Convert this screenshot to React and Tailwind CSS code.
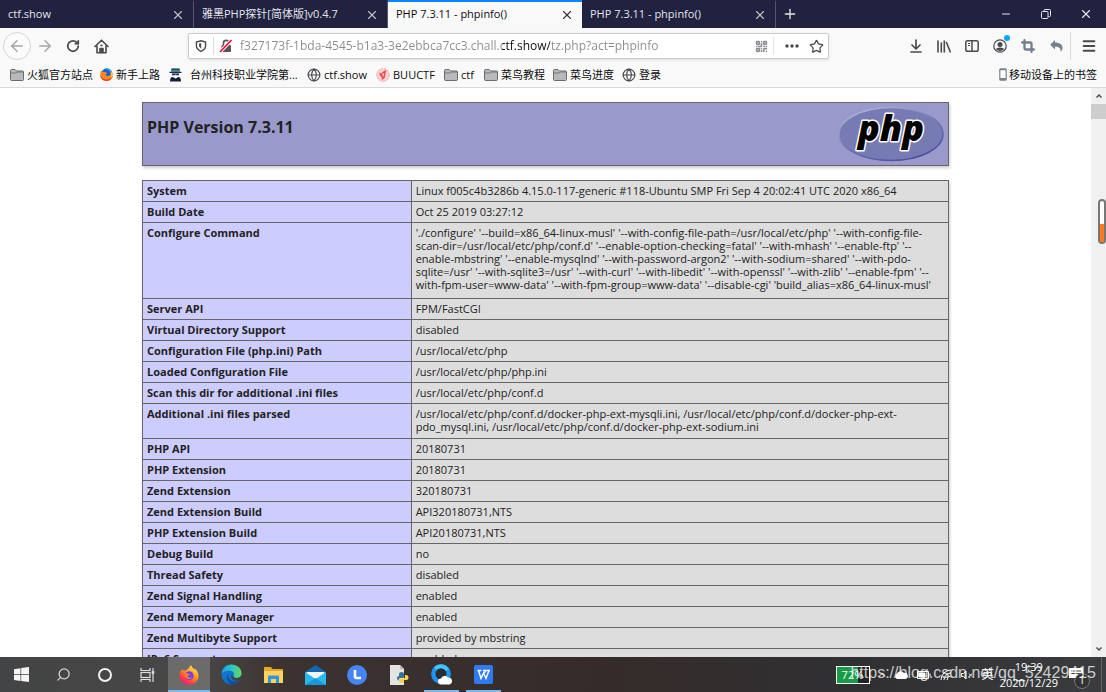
import React, { useState } from 'react';
import { ArrowLeft, ArrowRight, RotateCw, Search, Crop, X, Plus, Minus, Menu, Star, QrCode, Globe } from 'lucide-react';

const TABS = [
  { id: 1, title: 'ctf.show' },
  { id: 2, title: '雅黑PHP探针[简体版]v0.4.7' },
  { id: 3, title: 'PHP 7.3.11 - phpinfo()' },
  { id: 4, title: 'PHP 7.3.11 - phpinfo()' },
];

const INFO_ROWS = [
  ['System', 'Linux f005c4b3286b 4.15.0-117-generic #118-Ubuntu SMP Fri Sep 4 20:02:41 UTC 2020 x86_64'],
  ['Build Date', 'Oct 25 2019 03:27:12'],
  [
    'Configure Command',
    "'./configure' '--build=x86_64-linux-musl' '--with-config-file-path=/usr/local/etc/php' '--with-config-file-\nscan-dir=/usr/local/etc/php/conf.d' '--enable-option-checking=fatal' '--with-mhash' '--enable-ftp' '--\nenable-mbstring' '--enable-mysqlnd' '--with-password-argon2' '--with-sodium=shared' '--with-pdo-\nsqlite=/usr' '--with-sqlite3=/usr' '--with-curl' '--with-libedit' '--with-openssl' '--with-zlib' '--enable-fpm' '--\nwith-fpm-user=www-data' '--with-fpm-group=www-data' '--disable-cgi' 'build_alias=x86_64-linux-musl'",
  ],
  ['Server API', 'FPM/FastCGI'],
  ['Virtual Directory Support', 'disabled'],
  ['Configuration File (php.ini) Path', '/usr/local/etc/php'],
  ['Loaded Configuration File', '/usr/local/etc/php/php.ini'],
  ['Scan this dir for additional .ini files', '/usr/local/etc/php/conf.d'],
  [
    'Additional .ini files parsed',
    '/usr/local/etc/php/conf.d/docker-php-ext-mysqli.ini, /usr/local/etc/php/conf.d/docker-php-ext-\npdo_mysql.ini, /usr/local/etc/php/conf.d/docker-php-ext-sodium.ini',
  ],
  ['PHP API', '20180731'],
  ['PHP Extension', '20180731'],
  ['Zend Extension', '320180731'],
  ['Zend Extension Build', 'API320180731,NTS'],
  ['PHP Extension Build', 'API20180731,NTS'],
  ['Debug Build', 'no'],
  ['Thread Safety', 'disabled'],
  ['Zend Signal Handling', 'enabled'],
  ['Zend Memory Manager', 'enabled'],
  ['Zend Multibyte Support', 'provided by mbstring'],
  ['IPv6 Support', 'enabled'],
];

const FolderIcon = () => (
  <svg className="w-[14px] h-[12px] shrink-0" viewBox="0 0 14 12">
    <path d="M0.5 10.5v-9q0-1 1-1h3.5l1.5 1.5h6q1 0 1 1v7.500q0 1-1 1h-11q-1 0-1-1z" fill="#b9b9bb" stroke="#6b6b6f" />
    <path d="M1 4h5l1-1h6" stroke="#77777b" fill="none" />
  </svg>
);

const FirefoxIcon = ({ className }) => (
  <svg className={className} viewBox="0 0 20 20">
    <defs>
      <linearGradient id="ffBody" x1="0.8" y1="0" x2="0.2" y2="1">
        <stop offset="0" stopColor="#fff04a" />
        <stop offset="0.4" stopColor="#ff9a1f" />
        <stop offset="0.75" stopColor="#ff3b47" />
        <stop offset="1" stopColor="#e3158d" />
      </linearGradient>
    </defs>
    <path d="M3.200 4.200l1.300 1.400c.7-.2 1.700-.2 2.500.1C7.800 4.500 9 3.500 10 3.300 10.200 2 11 .9 12.200.2c.2 1.800 2 2.800 3.200 4.200.2-.3.200-.8.100-1.200 2.600 2 4 5 4 7.800 0 5-4.200 8.800-9.500 8.800S.6 15.900.6 10.900c0-2.600 1-5 2.600-6.700z" fill="url(#ffBody)" />
    <circle cx="10.400" cy="10.600" r="4.300" fill="#7540e8" />
    <path d="M4.800 8.500c1.700-1 3-.5 4.300.4l2.300.1c0 1-2.400 1.200-2.600 2.200-.1 1.500 2.500 2.200 4.400 1-1 2.600-6.800 3.500-8.400-3.700z" fill="#ff7a2a" />
    <path d="M9 5.500c3 0 5.600 1.500 5.800 4.700.4-.4.500-1.200.4-1.900C14.300 5.800 11.500 4.500 9 5.500z" fill="#ffb52b" />
  </svg>
);

const FirefoxClassicIcon = () => (
  <svg className="w-[13px] h-[13px] shrink-0" viewBox="0 0 20 20">
    <circle cx="10.500" cy="9" r="8.500" fill="#1f5fd0" />
    <path d="M9 1a9 9 0 018 5" fill="none" stroke="#2cb5e8" strokeWidth="2" />
    <path d="M1.500 4l2.500 2c1.500-.7 3-.5 4 .5L11 7.500 8.500 10c.3 2 3 3 5.500 2 2.500-1.200 3-4 2.300-6.500C18.500 6.500 20 9 19.700 11.500 19 16.500 15 20 10 20 4.500 20 .3 16 .3 10.500.3 8 .6 6 1.500 4z" fill="#ff8a1e" />
    <path d="M.3 10.500C1.500 15 5 17.500 9.500 17.500c4 0 7.500-2 10-6C19 16.500 15 20 10 20 4.500 20 .3 16 .3 10.500z" fill="#f0402c" />
    <path d="M16 5.500c2.500 1.500 3.700 3.500 3.700 6-1 2-2 3-3.200 3.500C18 12 17.500 9 16 5.500z" fill="#ffd83a" />
  </svg>
);

const SchoolIcon = () => (
  <svg className="w-[13px] h-[14px] shrink-0" viewBox="0 0 13 14">
    <path d="M2.500 0.500h8l.5 3h-9z" fill="#1d2940" />
    <path d="M2.300 1.800h8.400v1.700H2.300z" fill="#2b9c93" />
    <path d="M0.500 3.800h12v1.200h-12z" fill="#1d2940" />
    <path d="M3 5h7v3.500q-3.500 2.500-7 0z" fill="#f3f3f6" />
    <path d="M3 5.600h7v1.700H7.500l-1-.7-1 .7H3z" fill="#222a40" />
    <path d="M1 13.500q0-4.500 2.500-4.500l3 1.500 3-1.500q2.500 0 2.500 4.500z" fill="#191d38" />
  </svg>
);

const BuuIcon = () => (
  <svg className="w-[14px] h-[14px] shrink-0" viewBox="0 0 14 14">
    <circle cx="7" cy="7" r="6.300" fill="#fbd3d3" stroke="#f3a0a0" strokeDasharray="2 1" />
    <path d="M3.500 4.500l2 .8L7 3.500l3.500-1.500-1 3.500L9 9.500 6 12l-.5-3-2-2z" fill="#ea5050" />
    <path d="M6 6l2-1-.5 4z" fill="#fbd3d3" />
  </svg>
);

const PhoneIcon = () => (
  <svg className="w-[8px] h-[13px] shrink-0" viewBox="0 0 8 13">
    <rect x="0.800" y="0.800" width="6.400" height="11.400" rx="1" fill="#fff" stroke="#7d8288" strokeWidth="1.200" />
    <path d="M1 10h6v2H1zM1 1h6v1.200H1z" fill="#7d8288" />
  </svg>
);

const GlobeIcon = () => <Globe className="w-[14px] h-[14px] shrink-0 text-[#4a4a4f]" strokeWidth={2} />;

const BOOKMARKS = [
  { label: '火狐官方站点', icon: <FolderIcon />, width: 'w-[90px]' },
  { label: '新手上路', icon: <FirefoxClassicIcon />, width: 'w-[69px]' },
  { label: '台州科技职业学院第...', icon: <SchoolIcon />, width: 'w-[138px]', wide: true },
  { label: 'ctf.show', icon: <GlobeIcon />, width: 'w-[69px]' },
  { label: 'BUUCTF', icon: <BuuIcon />, width: 'w-[68px]' },
  { label: 'ctf', icon: <FolderIcon />, width: 'w-[40px]' },
  { label: '菜鸟教程', icon: <FolderIcon />, width: 'w-[69px]' },
  { label: '菜鸟进度', icon: <FolderIcon />, width: 'w-[69px]' },
  { label: '登录', icon: <GlobeIcon />, width: 'w-[60px]' },
];

const TabBar = ({ active, onSelect }) => (
  <div className="flex h-7 shrink-0 bg-[#20223f] text-[#e4e4ea]">
    {TABS.map((tab) => (
      <div
        key={tab.id}
        className={`flex w-[194px] shrink-0 items-center justify-between pl-2 pr-2 border-t-2 ${
          tab.id === active ? 'bg-[#f9f9fa] border-[#0a84ff] text-[#0c0c0d]' : 'border-[#20223f] border-r border-r-[#55566d]'
        }`}
      >
        <button onClick={() => onSelect(tab.id)} className="truncate pb-0.5 text-[11px] leading-4">{tab.title}</button>
        <button aria-label="关闭标签页" className="shrink-0 opacity-80">
          <X className="w-[14px] h-[14px]" strokeWidth={2} />
        </button>
      </div>
    ))}
    <button aria-label="新建标签页" className="flex w-7 items-center justify-center">
      <Plus className="w-4 h-4" strokeWidth={2} />
    </button>
    <div className="ml-auto flex">
      <button aria-label="最小化" className="flex w-10 items-center justify-center">
        <Minus className="w-3 h-3" />
      </button>
      <button aria-label="还原" className="flex w-10 items-center justify-center">
        <svg className="w-[10px] h-[10px]" viewBox="0 0 10 10" fill="none" stroke="currentColor">
          <rect x="0.500" y="2.500" width="6.500" height="7" rx="1" />
          <path d="M3 2.500v-1q0-1 1-1h4.500q1 0 1 1v5q0 1-1 1H7.500" />
        </svg>
      </button>
      <button aria-label="关闭" className="flex w-10 items-center justify-center">
        <X className="w-[14px] h-[14px]" strokeWidth={2} />
      </button>
    </div>
  </div>
);

const NavBar = () => {
  const [url, setUrl] = useState('f327173f-1bda-4545-b1a3-3e2ebbca7cc3.chall.ctf.show/tz.php?act=phpinfo');

  return (
    <div className="flex h-9 shrink-0 items-center pl-[3px] text-[#4a4a4f]">
      <button aria-label="后退" className="flex w-7 h-7 items-center justify-center rounded-full border border-[#d5d5d8] bg-[#fbfbfb] text-[#a5a5a8]">
        <ArrowLeft className="w-[18px] h-[18px]" />
      </button>
      <button aria-label="前进" className="flex w-7 h-7 items-center justify-center text-[#a5a5a8]">
        <ArrowRight className="w-[18px] h-[18px]" />
      </button>
      <button aria-label="刷新" className="flex w-7 h-7 items-center justify-center">
        <RotateCw className="w-[14px] h-[14px]" strokeWidth={3} />
      </button>
      <button aria-label="主页" className="flex w-7 h-7 items-center justify-center">
        <svg className="w-[15px] h-[15px]" viewBox="0 0 15 15" fill="none" stroke="currentColor" strokeWidth="1.600" strokeLinejoin="round" strokeLinecap="round">
          <path d="M1 7.500L7.500 1.200 14 7.500M3 7v6.800h9V7" />
          <path d="M6 13.500V9.500h3v4M7.500 9.500v4M7 6.500h1" />
        </svg>
      </button>
      <div className="mx-[73px] flex h-[26px] min-w-0 flex-1 items-center rounded-[2px] border border-[#cccccf] bg-white shadow-sm">
        <button aria-label="跟踪保护" className="flex w-6 shrink-0 justify-center">
          <svg className="w-3 h-3" viewBox="0 0 12 12" fill="none" stroke="#4a4a4f" strokeWidth="1.400">
            <path d="M6 .8l4.600 1.200v3.500Q10.600 9.500 6 11.300 1.400 9.500 1.400 5.500V2z" />
            <path d="M6.200 3.200v5.500Q4 7.500 4 5.200V3.600z" fill="#4a4a4f" stroke="none" />
          </svg>
        </button>
        <span className="h-[18px] w-px shrink-0 bg-[#dcdcde]" />
        <button aria-label="连接不安全" className="flex w-6 shrink-0 justify-center">
          <svg className="w-[14px] h-[14px]" viewBox="0 0 14 14">
            <path d="M4.500 6V4a2.600 2.600 0 015.200 0v2" fill="none" stroke="#55555a" strokeWidth="1.700" />
            <rect x="2.500" y="6" width="9.500" height="7" rx="1" fill="#55555a" />
            <path d="M1 13L12.500 1" stroke="#fff" strokeWidth="3.400" />
            <path d="M1 13L12.500 1" stroke="#ff0039" strokeWidth="1.700" />
          </svg>
        </button>
        {/* the gradient darkens only the host part of the address */}
        <input
          aria-label="地址"
          value={url}
          onChange={(e) => setUrl(e.target.value)}
          className="ml-0.5 min-w-0 flex-1 bg-clip-text bg-[linear-gradient(90deg,#8a8a8d_262px,#0c0c0d_262px,#0c0c0d_310px,#8a8a8d_310px)] text-transparent text-[12px] leading-5 outline-none"
        />
        <button aria-label="二维码" className="flex w-6 shrink-0 justify-center text-[#8d8d92]">
          <QrCode className="w-[13px] h-[13px]" strokeWidth={3} />
        </button>
        <span className="h-[18px] w-px shrink-0 bg-[#e4e4e6]" />
        <button aria-label="页面操作" className="ml-1.5 flex w-6 shrink-0 justify-center">
          <svg className="w-[14px] h-1" viewBox="0 0 14 4" fill="#4a4a4f">
            <circle cx="2" cy="2" r="1.700" />
            <circle cx="7" cy="2" r="1.700" />
            <circle cx="12" cy="2" r="1.700" />
          </svg>
        </button>
        <button aria-label="收藏" className="flex w-6 shrink-0 justify-center">
          <Star className="w-[15px] h-[15px]" strokeWidth={2} />
        </button>
      </div>
      <button aria-label="下载" className="flex w-7 justify-center">
        <svg className="w-3 h-[14px]" viewBox="0 0 12 14" fill="none" stroke="currentColor" strokeWidth="1.700" strokeLinecap="round" strokeLinejoin="round">
          <path d="M6 1v8.500M2 6l4 4 4-4M1 13h10" />
        </svg>
      </button>
      <button aria-label="我的足迹" className="flex w-7 justify-center">
        <svg className="w-[14px] h-[13px]" viewBox="0 0 14 13" fill="none" stroke="currentColor" strokeWidth="1.600" strokeLinecap="round">
          <path d="M1 1v11M4.300 3v9M7.300 1v11M9.500 2.500l3.700 9.300" />
        </svg>
      </button>
      <button aria-label="侧栏" className="flex w-7 justify-center">
        <svg className="w-[14px] h-3" viewBox="0 0 14 12" fill="none" stroke="currentColor" strokeWidth="1.500">
          <rect x="0.800" y="0.800" width="12.400" height="10.400" rx="1.800" />
          <path d="M7 1v10" />
          <path d="M3 3.500h2M3 5.500h2" strokeWidth="1" />
        </svg>
      </button>
      <button aria-label="账户" className="relative flex w-7 justify-center">
        <svg className="w-[14px] h-[14px]" viewBox="0 0 14 14">
          <circle cx="7" cy="7" r="6.200" fill="none" stroke="#4a4a4f" strokeWidth="1.200" />
          <circle cx="7" cy="5.500" r="2.500" fill="#4a4a4f" />
          <path d="M2.800 10q1-1.500 4.200-1.500T11.200 10Q9.500 12 7 12t-4.200-2z" fill="#4a4a4f" />
        </svg>
        <span className="absolute -top-1 right-1 w-[6px] h-[6px] rounded-full bg-[#00a8ff]" />
      </button>
      <button aria-label="截图" className="flex w-7 justify-center text-[#74808d]">
        <Crop className="w-[14px] h-[14px]" strokeWidth={4} />
      </button>
      <button aria-label="撤销" className="flex w-7 justify-center text-[#74808d]">
        <svg className="w-[13px] h-3" viewBox="0 0 13 12" fill="currentColor">
          <path d="M5 0v2.500c5 0 7.500 2.300 7.500 5.500 0 1.500-.8 3-2 3.800.8-3-1-5-5.500-5V9.500L0.200 4.700z" />
        </svg>
      </button>
      <span className="h-7 w-px shrink-0 bg-[#dcdcde]" />
      <button aria-label="菜单" className="flex w-[35px] justify-center">
        <Menu className="w-4 h-4" strokeWidth={3} />
      </button>
    </div>
  );
};

const BookmarksBar = () => (
  <nav className="flex h-6 shrink-0 items-center pb-0.5 pl-[10px] pr-[9px] border-b border-[#d9d9dc] text-[11px] leading-4 text-[#0c0c0d]">
    {BOOKMARKS.map((item) => (
      <a key={item.label} href="#" className={`flex shrink-0 items-center whitespace-nowrap ${item.wide ? 'gap-2' : 'gap-[3px]'} ${item.width}`}>
        {item.icon}
        {item.label}
      </a>
    ))}
    <a href="#" className="ml-auto flex shrink-0 items-center gap-0.5">
      <PhoneIcon />
      移动设备上的书签
    </a>
  </nav>
);

const PhpLogo = () => (
  <svg className="w-[108px] h-[58px] shrink-0" viewBox="0 0 108 58" role="img" aria-label="PHP logo">
    <defs>
      <linearGradient id="phpEdge" x1="0.2" y1="0" x2="0.8" y2="1">
        <stop offset="0" stopColor="#b4b6dc" />
        <stop offset="0.5" stopColor="#7478b4" />
        <stop offset="1" stopColor="#45479a" />
      </linearGradient>
    </defs>
    <ellipse cx="54" cy="29" rx="52" ry="26.500" fill="#777bb3" stroke="url(#phpEdge)" strokeWidth="1.500" />
    <text
      x="54"
      y="36"
      textAnchor="middle"
      className="font-['Open_Sans'] font-extrabold italic text-[36px]"
      fill="#000"
      stroke="#fff"
      strokeWidth="3"
      strokeLinejoin="round"
      paintOrder="stroke"
    >
      php
    </text>
  </svg>
);

const PhpInfo = () => (
  <main className="min-w-0 flex-1 overflow-hidden bg-white px-4 pt-[14px] text-[#222222]">
    <div className="mx-auto w-full max-w-[807px]">
      <header className="flex h-16 items-start justify-between border border-[#666666] bg-[#9999cc] pl-1 pr-[3px] pt-[2px] shadow-[1px_2px_3px_#cccccc]">
        <h1 className="pt-2.5 text-[16px] leading-6 font-bold">PHP Version 7.3.11</h1>
        <PhpLogo />
      </header>
      <table className="mt-[14px] h-[490px] w-full table-fixed border-collapse text-[11px] leading-[13px] shadow-[1px_2px_3px_#cccccc]">
        <tbody>
          {INFO_ROWS.map(([name, value]) => (
            <tr key={name}>
              <th scope="row" className="w-1/3 border border-[#666666] bg-[#ccccff] px-1 py-[3px] text-left align-top font-bold">
                {name}
              </th>
              <td className="whitespace-pre-line border border-[#666666] bg-[#dddddd] px-1 py-[3px] align-top">{value}</td>
            </tr>
          ))}
        </tbody>
      </table>
    </div>
  </main>
);

const ScrollBar = () => (
  <div className="flex w-[15px] shrink-0 flex-col items-center bg-[#f0f0f0] text-[#505050]">
    <svg className="my-1 w-2 h-2" viewBox="0 0 8 8" fill="none" stroke="currentColor" strokeWidth="1.500">
      <path d="M1.500 5.500L4 3l2.500 2.500" />
    </svg>
    <span className="h-[15px] w-full bg-[#cdcdcd]" />
    <svg className="mt-auto mb-1 w-2 h-2" viewBox="0 0 8 8" fill="none" stroke="currentColor" strokeWidth="1.500">
      <path d="M1.500 2.500L4 5l2.500-2.500" />
    </svg>
  </div>
);

const TASKS = [
  {
    name: '开始',
    icon: (
      <svg className="w-[15px] h-[15px]" viewBox="0 0 15 15" fill="#f5f5f5">
        <path d="M0 2.200L6.500 1.200v6H0zM7.200 1.100L15 0v7.200H7.200zM0 7.900h6.500v6L0 13zM7.200 7.900H15V15l-7.800-1z" />
      </svg>
    ),
  },
  { name: '搜索', icon: <Search className="w-[15px] h-[15px] -scale-x-100 text-[#d8d8d8]" strokeWidth={2} /> },
  { name: 'Cortana', icon: <span className="w-[14px] h-[14px] rounded-full border-2 border-[#f0f0f0]" /> },
  {
    name: '任务视图',
    icon: (
      <svg className="w-[15px] h-[14px]" viewBox="0 0 15 14" fill="none" stroke="#dddddd" strokeWidth="1.200">
        <path d="M1 0v2.500h9V0M1 14v-2.500h9V14M13 0v14" />
        <rect x="1" y="4.500" width="9" height="5" />
        <path d="M11.700 4.500h2.600" strokeWidth="2.600" />
      </svg>
    ),
  },
  { name: 'Firefox', tile: 'bg-[#6b6b6b]', line: 'w-full', icon: <FirefoxIcon className="w-5 h-5" /> },
  {
    name: 'Edge',
    icon: (
      <svg className="w-[21px] h-[21px]" viewBox="0 0 21 21">
        <defs>
          <linearGradient id="edgeTop" x1="0" y1="0.500" x2="1" y2="0.500">
            <stop offset="0" stopColor="#1b9de2" />
            <stop offset="0.500" stopColor="#2cc3c9" />
            <stop offset="1" stopColor="#62dd58" />
          </linearGradient>
        </defs>
        <circle cx="10.500" cy="10.500" r="10" fill="#1173cc" />
        <path d="M.5 10.500C.5 4.500 5 .5 10.500.5S20.500 4.500 20.500 9c0 3.200-2.500 5-5 5s-3.700-1-3-2.200c1.500-2.500-.5-5-4-5-4 0-7.500 1.500-8 3.700z" fill="url(#edgeTop)" />
        <path d="M7.500 9.500C6 13 8.500 17 13 17.300c2.400.1 4.300-.6 5.800-1.600-2 3-5 4.800-8.300 4.800C6.500 19 4.500 13 7.500 9.500z" fill="#0c4f9e" />
        <path d="M12.500 11.800c-.7 1.200.5 2.200 3 2.200 2 0 4-1 4.700-2.700l.8 4-2 1c-5 2-9.500-1-9-4.500z" fill="#464442" />
      </svg>
    ),
  },
  {
    name: '文件资源管理器',
    icon: (
      <svg className="w-[19px] h-4" viewBox="0 0 19 16">
        <path d="M0 0h7l1.500 2H18q1 0 1 1v4H0z" fill="#e5a824" />
        <path d="M0 4h19v12H0z" fill="#ffd35c" />
        <path d="M4 16V9.500q0-1 1-1h9q1 0 1 1V16h-3v-4H7v4z" fill="#3595dc" />
      </svg>
    ),
  },
  {
    name: '邮件',
    icon: (
      <svg className="w-[21px] h-5" viewBox="0 0 21 20">
        <path d="M0 7L10.500 0 21 7v2H0z" fill="#1166ae" />
        <path d="M1.500 7h18v7h-18z" fill="#f2f6fa" />
        <path d="M0 7l10.500 7L21 7v13H0z" fill="#2cb8ec" />
        <path d="M0 20l10.500-7L21 20z" fill="#1796db" />
      </svg>
    ),
  },
  {
    name: 'L',
    icon: (
      <svg className="w-5 h-5" viewBox="0 0 20 20">
        <circle cx="10" cy="10" r="10" fill="#4585f5" />
        <path d="M8 5v6.500q0 1.500 1.500 1.500H14" fill="none" stroke="#fff" strokeWidth="2.600" />
      </svg>
    ),
  },
  {
    name: 'Python',
    icon: (
      <svg className="w-5 h-5" viewBox="0 0 20 20">
        <path d="M1 0h10l4 4v16H1z" fill="#e4e4e2" />
        <path d="M11 0v4h4z" fill="#b9b9b7" />
        <path d="M10 12V9q0-2 2.500-2T15 9v3q0 1-1 1h-3q-1.500 0-1.500 2.500Q8 15 8 13t2-2z" fill="#35719f" />
        <path d="M16 10h1.500q2 0 2 2.500t-2 2.500H15v1q0 2-2.500 2T10 16v-1q0-1.500 1.500-1.500h3q1.500 0 1.500-1.500z" fill="#fdd13f" />
      </svg>
    ),
  },
  {
    name: 'QQ浏览器',
    line: 'w-[35px]',
    icon: (
      <svg className="w-[21px] h-[21px]" viewBox="0 0 21 21">
        <circle cx="10" cy="10" r="7.700" fill="#2b2b30" stroke="#1d94f2" strokeWidth="4.400" />
        <path d="M4 4.500A8 8 0 0116.500 6" fill="none" stroke="#43c4f8" strokeWidth="3.500" />
        <path d="M10 20.500a3 3 0 010-6 4 4 0 017-1 3.600 3.600 0 011.500 7z" fill="#fff" />
      </svg>
    ),
  },
  {
    name: 'WPS',
    line: 'w-[35px]',
    icon: (
      <svg className="w-[19px] h-[19px]" viewBox="0 0 19 19">
        <rect width="19" height="19" rx="2" fill="#2e7bf0" />
        <path d="M3.500 5.500h4M4.500 5.500l2.500 8L9.500 8l2.500 5.500 3-8M9 5.500h7M11.500 5.500l-1 2.500" fill="none" stroke="#fff" strokeWidth="1.400" />
      </svg>
    ),
  },
];

const TaskBar = () => (
  <footer className="relative flex h-[35px] shrink-0 bg-[linear-gradient(90deg,#434445_0%,#484746_18%,#3c322f_26%,#352c2a_55%,#303033_78%,#3b3c3f_100%)] text-white">
    {TASKS.map((task) => (
      <button key={task.name} aria-label={task.name} className={`relative flex w-[42px] shrink-0 items-center justify-center ${task.tile || ''}`}>
        {task.icon}
        {task.line && <span className={`absolute bottom-0 h-0.5 bg-[#76b9ed] ${task.line}`} />}
      </button>
    ))}
    <div className="ml-auto flex items-center pr-[14px]">
      <span className="mr-2 flex h-[18px] w-[34px] items-center border border-white bg-[linear-gradient(90deg,#169c45_66%,#222_66%)] pl-[5px] text-[11px] leading-4">72%</span>
      <div className="flex w-[116px] items-center justify-between">
        <svg className="w-2 h-2" viewBox="0 0 8 8" fill="none" stroke="currentColor">
          <path d="M1 5.500l3-3 3 3" />
        </svg>
        <svg className="w-[14px] h-[9px]" viewBox="0 0 14 9" fill="currentColor">
          <path d="M3 9a3 3 0 010-5.500A4 4 0 0110 3a3 3 0 011.500 6z" />
        </svg>
        <svg className="w-[14px] h-2" viewBox="0 0 14 8" fill="none" stroke="currentColor">
          <path d="M.5.500h11v7H.5zM13 2.500v3" />
          <path d="M2 2h6v4H2z" fill="currentColor" />
        </svg>
        <svg className="w-3 h-3" viewBox="0 0 12 12" fill="none" stroke="currentColor">
          <path d="M1 11A10 10 0 0111 1M4 11a7 7 0 017-7M7 11a4 4 0 014-4" />
        </svg>
        <svg className="w-3 h-[10px]" viewBox="0 0 12 10" fill="none" stroke="currentColor">
          <path d="M.5 3.500h2L5 1v8L2.500 6.500h-2zM8 3.500l3 3M11 3.500l-3 3" />
        </svg>
        <span className="text-[12px] leading-4">英</span>
      </div>
      <time className="ml-1.5 flex flex-col items-center text-[11px] leading-4">
        <span>19:39</span>
        <span>2020/12/29</span>
      </time>
      <button aria-label="通知" className="relative ml-2.5 flex w-6 h-6 items-center">
        <svg className="w-4 h-[14px]" viewBox="0 0 16 14">
          <path d="M1 0h14v10h-3v3l-3-3H1z" fill="#fff" />
          <path d="M3 3h10M3 5.500h10" stroke="#444" />
        </svg>
        <span className="absolute top-2.5 left-1.5 flex w-4 h-4 items-center justify-center rounded-full border border-[#777] bg-[#333335] text-[11px]">1</span>
      </button>
    </div>
    <span className="absolute right-1 top-0 h-full w-px bg-[#666]" />
    <span className="pointer-events-none absolute right-[10px] top-[6px] whitespace-nowrap font-['Liberation_Sans'] text-[16px] leading-5 text-white/75">
      https://blog.csdn.net/qq_52429415
    </span>
  </footer>
);

const App = () => {
  const [activeTab, setActiveTab] = useState(3);

  return (
    <div className="flex h-screen flex-col overflow-hidden bg-[#f9f9fa] font-['Open_Sans','Noto_Sans_CJK_SC',sans-serif]">
      <TabBar active={activeTab} onSelect={setActiveTab} />
      <NavBar />
      <BookmarksBar />
      <div className="relative flex min-h-0 flex-1">
        <PhpInfo />
        <ScrollBar />
        <div className="absolute right-0 top-[111px] flex h-[45px] w-[8px] items-end rounded-[4px] border-2 border-[#777] bg-white">
          <span className="h-[18px] w-full bg-[#ff7a1c]" />
        </div>
      </div>
      <TaskBar />
    </div>
  );
};

export default App;
